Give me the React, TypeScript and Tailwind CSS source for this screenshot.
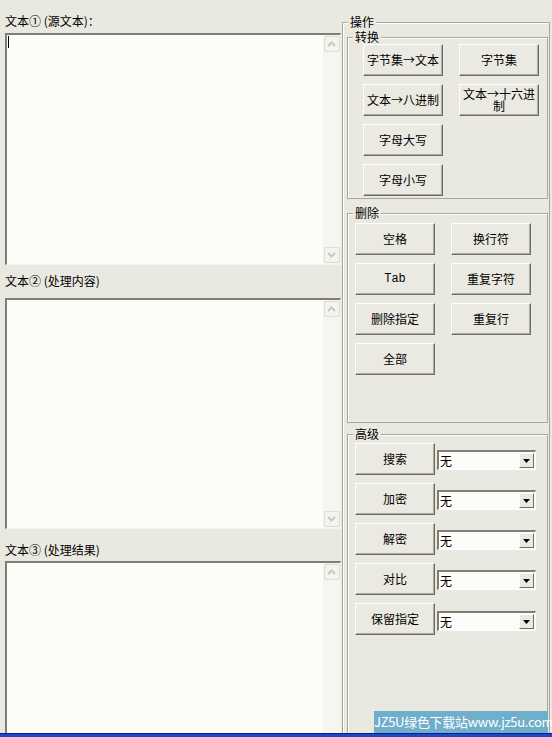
import React from "react";

const font = "font-['Noto_Sans_CJK_SC','Noto_Sans',sans-serif]";

const btn =
  "w-[80px] h-[32px] bg-[#ebeae2] border border-t-white border-l-white border-b-[#6f6e66] border-r-[#6f6e66] shadow-[inset_-1px_-1px_0_#aca99e] text-[12px] leading-[12px] text-black flex items-center justify-center text-center px-[2px]";

const groupBox = "w-full border border-[#a9a89c] shadow-[inset_1px_1px_0_#fff]";
const legendCls = "px-[2px] text-[12px] leading-[12px] text-black bg-[#eae9e1]";

function ScrollArrow({ up }: { up?: boolean }) {
  return (
    <div className="w-[16px] h-[16px] mx-auto rounded-[2px] border border-[#dddcd3] bg-[#f4f3ee] flex items-center justify-center">
      <svg width="9" height="6" viewBox="0 0 9 6">
        <polyline
          points={up ? "1,5 4.5,1.5 8,5" : "1,1 4.5,4.5 8,1"}
          fill="none"
          stroke="#c9c8c0"
          strokeWidth="2"
        />
      </svg>
    </div>
  );
}

function TextBox({ height, caret }: { height: string; caret?: boolean }) {
  return (
    <div
      className={`ml-[5px] w-[336px] ${height} shrink-0 flex bg-[#fcfcf8] border-t-2 border-l-2 border-t-[#807e74] border-l-[#807e74] border-b border-r border-b-[#f4f3ee] border-r-[#f4f3ee]`}
    >
      <div className="flex-1 pt-[1px] pl-[1px]">
        {caret && <div className="w-[1px] h-[12px] bg-black" />}
      </div>
      <div className="w-[17px] flex flex-col justify-between bg-[#f6f5f0] py-[1px]">
        <ScrollArrow up />
        <ScrollArrow />
      </div>
    </div>
  );
}

function Select({ extra }: { extra?: string }) {
  return (
    <div
      className={`w-[99px] h-[20px] flex items-center bg-[#fcfcf8] border-t-2 border-l-2 border-t-[#807e74] border-l-[#807e74] border-b border-r border-b-white border-r-white ${extra ?? ""}`}
    >
      <span className="flex-1 pl-[1px] text-[12px] leading-[12px] text-black">无</span>
      <div className="w-[15px] h-[15px] mr-[1px] bg-[#ebeae2] border border-t-white border-l-white border-b-[#6f6e66] border-r-[#6f6e66] flex items-center justify-center">
        <svg width="7" height="4" viewBox="0 0 7 4">
          <polygon points="0,0 7,0 3.5,4" fill="#000" />
        </svg>
      </div>
    </div>
  );
}

export default function App() {
  const advanced = ["搜索", "加密", "解密", "对比", "保留指定"];

  return (
    <div className={`relative w-[552px] h-[737px] overflow-hidden bg-[#eae9e1] ${font}`}>
      <div className="flex h-[733px] overflow-hidden">
        {/* left: text boxes */}
        <div className="w-[342px] shrink-0 flex flex-col">
          <div className="mt-[14px] ml-[5px] h-[14px] text-[12px] leading-[14px] text-black whitespace-pre">
            文本① (源文本)：
          </div>
          <div className="mt-[5px]">
            <TextBox height="h-[232px]" caret />
          </div>
          <div className="mt-[9px] ml-[5px] h-[14px] text-[12px] leading-[14px] text-black whitespace-pre">
            文本② (处理内容)
          </div>
          <div className="mt-[10px]">
            <TextBox height="h-[231px]" />
          </div>
          <div className="mt-[14px] ml-[5px] h-[14px] text-[12px] leading-[14px] text-black whitespace-pre">
            文本③ (处理结果)
          </div>
          <div className="mt-[4px]">
            <TextBox height="h-[200px]" />
          </div>
        </div>

        {/* right: operations */}
        <div className="w-[210px] shrink-0">
          <fieldset className="mt-[16px] w-[208px] h-[760px] border border-[#a9a89c] shadow-[inset_1px_1px_0_#fff] pl-[4px] pr-[1px]">
            <legend className={`ml-[1px] ${legendCls}`}>操作</legend>

            <fieldset className={`mt-[3px] ${groupBox}`}>
              <legend className={`ml-[5px] ${legendCls}`}>转换</legend>
              <div className="grid grid-cols-[80px_80px] gap-x-[16px] gap-y-[8px] pl-[15px] pt-[1px] pb-[2px]">
                <div className={btn}>字节集→文本</div>
                <div className={btn}>字节集</div>
                <div className={btn}>文本→八进制</div>
                <div className={btn}>文本→十六进制</div>
                <div className={btn}>字母大写</div>
                <div />
                <div className={btn}>字母小写</div>
              </div>
            </fieldset>

            <fieldset className={`mt-[8px] ${groupBox}`}>
              <legend className={`ml-[5px] ${legendCls}`}>删除</legend>
              <div className="grid grid-cols-[80px_80px] gap-x-[16px] gap-y-[8px] pl-[7px] pt-[4px] pb-[47px]">
                <div className={btn}>空格</div>
                <div className={btn}>换行符</div>
                <div className={`${btn} font-['Liberation_Mono',monospace]`}>Tab</div>
                <div className={btn}>重复字符</div>
                <div className={btn}>删除指定</div>
                <div className={btn}>重复行</div>
                <div className={btn}>全部</div>
              </div>
            </fieldset>

            <fieldset className={`mt-[5px] h-[400px] ${groupBox}`}>
              <legend className={`ml-[5px] ${legendCls}`}>高级</legend>
              <div className="flex flex-col gap-y-[8px] pl-[7px] pt-[3px]">
                {advanced.map((label, i) => (
                  <div key={label} className="flex items-center gap-x-[2px]">
                    <div className={btn}>{label}</div>
                    <Select extra={i === advanced.length - 1 ? "mt-[4px]" : "mt-[2px]"} />
                  </div>
                ))}
              </div>
            </fieldset>
          </fieldset>
        </div>
      </div>

      {/* taskbar strip */}
      <div className="h-[4px] bg-[#1c48cc] border-t border-t-[#0a1f80]" />

      {/* watermark */}
      <div className="absolute right-[4px] bottom-[4px] w-[174px] h-[22px] bg-[#62a9c9]/90 text-white text-[13px] leading-[22px] tracking-[-0.3px] text-center whitespace-nowrap">
        JZ5U绿色下载站www.jz5u.com
      </div>
    </div>
  );
}
